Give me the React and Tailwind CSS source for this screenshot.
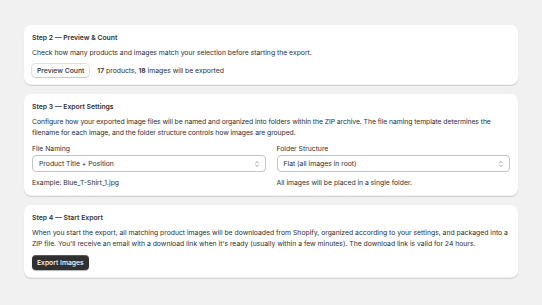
import React, { useState } from 'react';

function Chevrons() {
  return (
    <svg width="6" height="8" viewBox="0 0 12 16" fill="none" stroke="#8a8a8a" strokeWidth="1.6" strokeLinecap="round" strokeLinejoin="round">
      <path d="M3 6l3-3 3 3" />
      <path d="M3 10l3 3 3-3" />
    </svg>
  );
}

function Select({ value }) {
  return (
    <div className="flex items-center justify-between h-[17px] rounded-[4px] border border-[#c4c4c4] bg-white pl-[6px] pr-[5px] text-[#303030]">
      <span>{value}</span>
      <Chevrons />
    </div>
  );
}

function Card({ title, children }) {
  return (
    <div className="bg-white rounded-[7px] px-2 pt-[7px] pb-[8px] shadow-[0_1px_0_0_rgba(26,26,26,0.07),0_1px_1px_0_rgba(0,0,0,0.08),inset_0_-1px_0_0_rgba(0,0,0,0.06)]">
      <h2 className="font-semibold leading-[11px] text-[#303030]">{title}</h2>
      {children}
    </div>
  );
}

export default function App() {
  const [naming] = useState('Product Title + Position');
  const [folders] = useState('Flat (all images in root)');

  return (
    <div className="min-h-[305px] bg-[#f1f1f1] px-6 pt-[25px] pb-6 text-[6.85px] leading-[11px] tracking-[-0.02px] text-[#303030] font-['Inter',sans-serif]">
      <div className="flex flex-col gap-[9px]">
        <Card title="Step 2 — Preview & Count">
          <p className="mt-[4px]">Check how many products and images match your selection before starting the export.</p>
          <div className="mt-[6px] flex items-center gap-2">
            <button className="h-[13px] px-[5px] rounded-[4px] bg-white font-medium text-[#303030] shadow-[0_0_0_1px_rgba(0,0,0,0.12),0_1px_0_0_rgba(0,0,0,0.1)]">
              Preview Count
            </button>
            <span><b className="font-semibold">17</b> products, <b className="font-semibold">18</b> images will be exported</span>
          </div>
        </Card>

        <Card title="Step 3 — Export Settings">
          <p className="mt-[4px] tracking-[-0.08px]">
            Configure how your exported image files will be named and organized into folders within the ZIP archive. The file naming template determines the filename for each image, and the folder structure controls how images are grouped.
          </p>
          <div className="mt-[5px] grid grid-cols-2 gap-x-[11px]">
            <div>
              <label className="block mb-[1px]">File Naming</label>
              <Select value={naming} />
              <p className="mt-[5px]">Example: Blue_T-Shirt_1.jpg</p>
            </div>
            <div>
              <label className="block mb-[1px]">Folder Structure</label>
              <Select value={folders} />
              <p className="mt-[5px]">All images will be placed in a single folder.</p>
            </div>
          </div>
        </Card>

        <Card title="Step 4 — Start Export">
          <p className="mt-[4px]">
            When you start the export, all matching product images will be downloaded from Shopify, organized according to your settings, and packaged into a ZIP file. You'll receive an email with a download link when it's ready (usually within a few minutes). The download link is valid for 24 hours.
          </p>
          <button className="mt-[6px] h-[15px] px-[5px] rounded-[4px] bg-[#303030] font-medium text-white shadow-[inset_0_1px_0_0_rgba(255,255,255,0.2),0_1px_1px_rgba(0,0,0,0.3)]">
            Export Images
          </button>
        </Card>
      </div>
    </div>
  );
}
